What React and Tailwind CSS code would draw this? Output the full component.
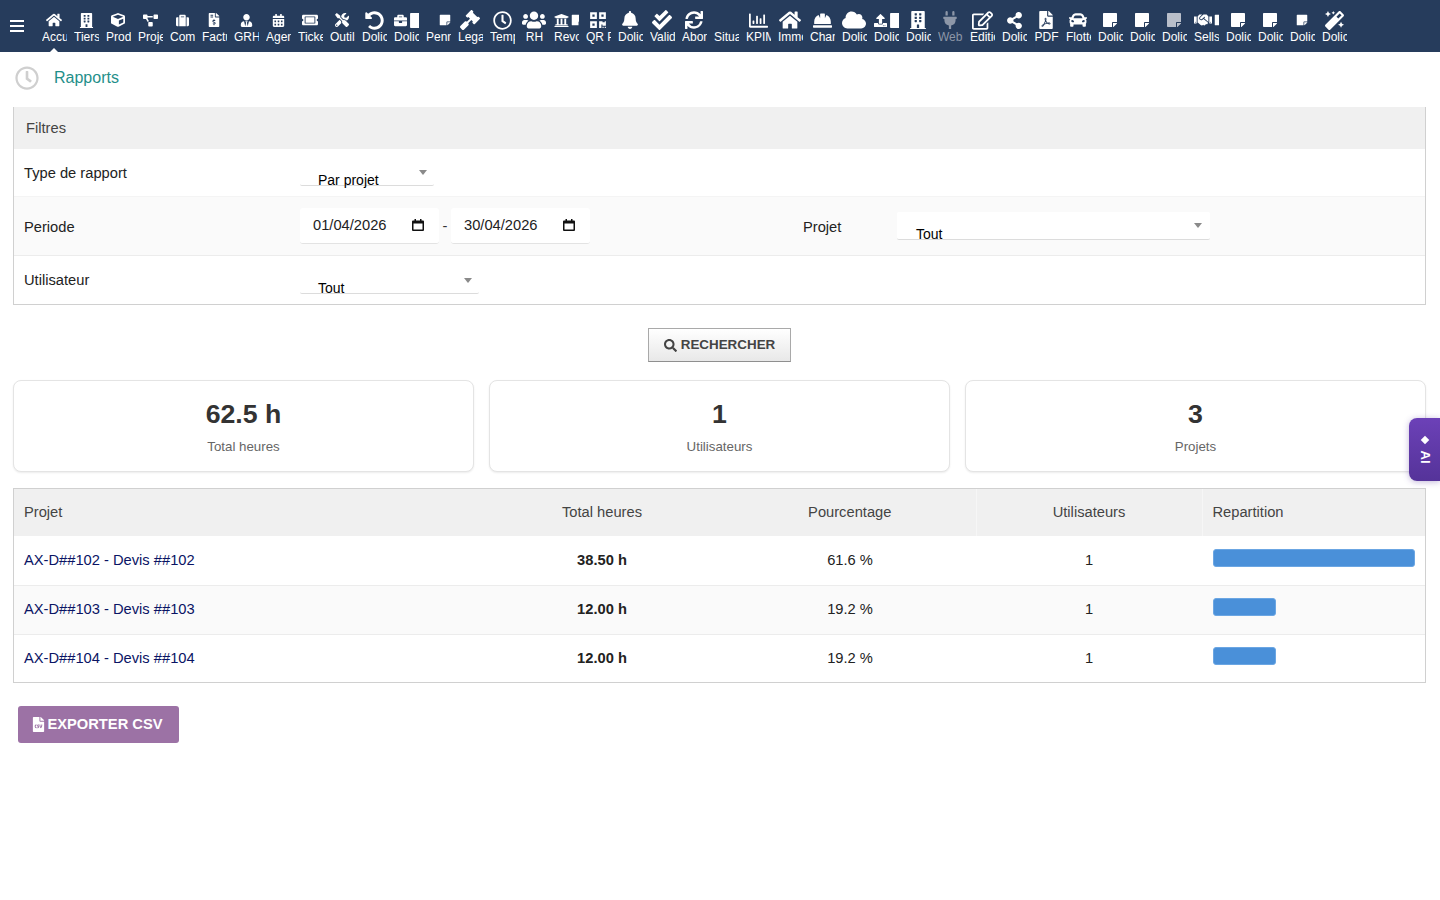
import React from "react";
import {
  FaHome, FaBuilding, FaCube, FaProjectDiagram, FaSuitcase, FaFileInvoiceDollar, FaUserTie, FaCalendarAlt,
  FaTicketAlt, FaTools, FaUndoAlt, FaBriefcase, FaStickyNote, FaGavel, FaRegClock, FaUsers, FaUniversity,
  FaQrcode, FaBell, FaCheckDouble, FaSync, FaRegChartBar, FaHardHat, FaCloud, FaUpload, FaPlug, FaRegEdit,
  FaShareAlt, FaFilePdf, FaCar, FaHandshake, FaMagic, FaSearch, FaFileCsv,
} from "react-icons/fa";

const Spacer = () => <span className="inline-block w-[15px] h-[1px]" />;

const menu = [
  { label: "Accueil", icons: [[FaHome, 16]] },
  { label: "Tiers", icons: [[FaBuilding, 15]] },
  { label: "Produits", icons: [[FaCube, 14]] },
  { label: "Projets", icons: [[FaProjectDiagram, 15]] },
  { label: "Commerce", icons: [[FaSuitcase, 13]] },
  { label: "Facturation", icons: [[FaFileInvoiceDollar, 14]] },
  { label: "GRH", icons: [[FaUserTie, 13]] },
  { label: "Agenda", icons: [[FaCalendarAlt, 13]] },
  { label: "Tickets", icons: [[FaTicketAlt, 16]] },
  { label: "Outils", icons: [[FaTools, 14]] },
  { label: "Dolicloud", icons: [[FaUndoAlt, 19]] },
  { label: "Dolicloud", clip: true, icons: [[FaBriefcase, 13], [FaStickyNote, 17]] },
  { label: "Penneo", clip: true, icons: [[Spacer, 0], [FaStickyNote, 12]] },
  { label: "Legal", icons: [[FaGavel, 20]] },
  { label: "Temps", icons: [[FaRegClock, 19]] },
  { label: "RH", icons: [[FaUsers, 24]] },
  { label: "Revolut", clip: true, icons: [[FaUniversity, 15], [FaStickyNote, 12]] },
  { label: "QR Paiement", icons: [[FaQrcode, 18]] },
  { label: "Dolicloud", icons: [[FaBell, 18]] },
  { label: "Validation", icons: [[FaCheckDouble, 20]] },
  { label: "Abonnement", icons: [[FaSync, 18]] },
  { label: "Situation", icons: [] },
  { label: "KPIManager", icons: [[FaRegChartBar, 19]] },
  { label: "Immobilier", icons: [[FaHome, 22]] },
  { label: "Chantier", icons: [[FaHardHat, 19]] },
  { label: "Dolicloud", icons: [[FaCloud, 24]] },
  { label: "Dolicloud", clip: true, icons: [[FaUpload, 13], [FaStickyNote, 17]] },
  { label: "Dolicloud", icons: [[FaBuilding, 18]] },
  { label: "Webhook", dim: true, icons: [[FaPlug, 18]] },
  { label: "Edition", icons: [[FaRegEdit, 21]] },
  { label: "Dolicloud", icons: [[FaShareAlt, 17]] },
  { label: "PDF", icons: [[FaFilePdf, 18]] },
  { label: "Flotte", icons: [[FaCar, 18]] },
  { label: "Dolicloud", icons: [[FaStickyNote, 16]] },
  { label: "Dolicloud", icons: [[FaStickyNote, 16]] },
  { label: "Dolicloud", icons: [[FaStickyNote, 16]], soft: true },
  { label: "Sellsy", clip: true, icons: [[FaHandshake, 18], [FaStickyNote, 12]] },
  { label: "Dolicloud", icons: [[FaStickyNote, 16]] },
  { label: "Dolicloud", icons: [[FaStickyNote, 16]] },
  { label: "Dolicloud", icons: [[FaStickyNote, 12]] },
  { label: "Dolicloud", icons: [[FaMagic, 19]] },
];

const rows = [
  ["AX-D##102 - Devis ##102", "38.50 h", "61.6 %", "w-[202px]", "bg-white h-[49px]"],
  ["AX-D##103 - Devis ##103", "12.00 h", "19.2 %", "w-[63px]", "bg-[#fafafa] h-[49px]"],
  ["AX-D##104 - Devis ##104", "12.00 h", "19.2 %", "w-[63px]", "bg-white h-[48px]"],
];

function Select({ label, w, h = "h-[24px]", bg = "", arrow = "top-[8px] right-[7px]", left = "left-[18px]" }) {
  return (
    <div className={`relative ${w} ${h} ${bg} border-b border-[#dcdcdc] rounded-[2px]`}>
      <span className={`absolute ${left} bottom-[-4px] text-[14px] leading-[18px] text-black`}>{label}</span>
      <span className={`absolute ${arrow} w-0 h-0 border-x-[4px] border-x-transparent border-t-[5px] border-t-[#8a8a8a]`} />
    </div>
  );
}

function DateField({ value }) {
  return (
    <div className="w-[139px] h-[36px] bg-white rounded-[3px] border-b border-[#e3e3e3] flex items-center justify-between pl-[13px] pr-[14px] pb-[1px] text-[#222]">
      <span>{value}</span>
      <svg width="14" height="14" viewBox="0 0 14 14"><path d="M1 3.5a1 1 0 0 1 1-1h10a1 1 0 0 1 1 1V12a1 1 0 0 1-1 1H2a1 1 0 0 1-1-1z M2.5 5.5V11.5H11.5V5.5z" fill="#111" fillRule="evenodd"/><rect x="3.5" y="1" width="1.5" height="2" fill="#111"/><rect x="9" y="1" width="1.5" height="2" fill="#111"/></svg>
    </div>
  );
}

function Stat({ value, label }) {
  return (
    <div className="h-[92px] rounded-[8px] border border-[#e4e4e4] shadow-[0_1px_2px_rgba(0,0,0,0.08)] bg-white flex flex-col items-center pt-[18px]">
      <div className="text-[26.7px] leading-[30px] font-bold text-[#333]">{value}</div>
      <div className="mt-[9px] text-[13.3px] leading-[18px] text-[#666]">{label}</div>
    </div>
  );
}

export default function App() {
  return (
    <div className="relative min-h-[900px] bg-white overflow-hidden font-['Liberation_Sans',Arial,sans-serif] text-[14.7px] text-[#222]">
      <header className="relative h-[52px] bg-[#263c5c] flex pl-[10px] text-white">
        <div className="w-[28px] pt-[20px] shrink-0">
          <div className="w-[14px] flex flex-col gap-[3px]">
            <span className="h-[2px] bg-white" /><span className="h-[2px] bg-white" /><span className="h-[2px] bg-white" />
          </div>
        </div>
        {menu.map(({ label, icons, dim, soft, clip }, i) => (
          <div key={i} className={`w-[32px] shrink-0 flex flex-col items-center ${dim ? "text-[#8d97a8]" : ""}`}>
            <div className={`h-[30px] pt-[10px] flex items-center gap-[2px] ${clip ? "w-[25px] ml-[1px] justify-start overflow-hidden" : "justify-center"} ${soft ? "text-[#b9bfca]" : ""}`}>
              {icons.map(([Icon, size], k) => <Icon key={k} size={size} className="shrink-0" />)}
            </div>
            <div className="w-[25px] ml-[1px] overflow-hidden whitespace-nowrap text-center text-[12px] leading-[14px]">{label}</div>
          </div>
        ))}
        <span className="absolute left-[50px] bottom-0 w-0 h-0 border-x-[4px] border-x-transparent border-b-[4px] border-b-white" />
      </header>

      <div className="h-[55px] flex items-center pl-[15px] pb-[4px]">
        <FaRegClock size={24} className="text-[#cfcfcf]" />
        <h1 className="ml-[15px] text-[16px] text-[#1f8f8a] font-normal">Rapports</h1>
      </div>

      <section className="ml-[13px] mr-[14px] border-x border-b border-[#d0d0d0]">
        <div className="h-[42px] bg-[#f0f0f0] flex items-center pl-[12px] text-[#444]">Filtres</div>
        <div className="h-[48px] flex items-center pl-[10px] border-b border-[#f4f4f4]">
          <div className="w-[276px] pt-[2px]">Type de rapport</div>
          <div className="mt-[2px]"><Select label="Par projet" w="w-[134px]" /></div>
        </div>
        <div className="h-[59px] flex items-center pl-[10px] bg-[#fafafa] border-b border-[#ececec]">
          <div className="w-[276px] pt-[2px]">Periode</div>
          <DateField value="01/04/2026" />
          <span className="w-[12px] text-center text-[#333]">-</span>
          <DateField value="30/04/2026" />
          <div className="ml-[213px] w-[94px] pt-[2px]">Projet</div>
          <Select label="Tout" w="w-[313px]" h="h-[28px]" bg="bg-white" arrow="top-[11px] right-[8px]" left="left-[19px]" />
        </div>
        <div className="h-[48px] flex items-center pl-[10px]">
          <div className="w-[276px]">Utilisateur</div>
          <div className="mt-[3px]"><Select label="Tout" w="w-[179px]" /></div>
        </div>
      </section>

      <div className="flex justify-center mt-[23px] pr-[1px]">
        <button className="w-[143px] h-[34px] border border-[#a9a9a9] border-b-[#8f8f8f] bg-gradient-to-b from-white to-[#e8e8e8] text-[#444] font-bold text-[13.4px] flex items-center justify-center gap-[4px]">
          <FaSearch size={13} /> RECHERCHER
        </button>
      </div>

      <div className="grid grid-cols-3 gap-[15px] ml-[13px] mr-[14px] mt-[18px]">
        <Stat value="62.5 h" label="Total heures" />
        <Stat value="1" label="Utilisateurs" />
        <Stat value="3" label="Projets" />
      </div>

      <div className="ml-[13px] mr-[14px] mt-[16px] border border-[#d0d0d0]">
        <table className="w-full table-fixed border-collapse">
          <colgroup>
            <col className="w-[466px]" /><col className="w-[244px]" /><col className="w-[252px]" /><col className="w-[226px]" /><col className="w-[223px]" />
          </colgroup>
          <thead>
            <tr className="h-[47px] bg-[#f0f0f0] text-[#444]">
              <th className="font-normal text-left pl-[10px]">Projet</th>
              <th className="font-normal text-center">Total heures</th>
              <th className="font-normal text-center">Pourcentage</th>
              <th className="font-normal text-center border-l border-[#f6f6f6]">Utilisateurs</th>
              <th className="font-normal text-left pl-[10px] border-l border-[#f6f6f6]">Repartition</th>
            </tr>
          </thead>
          <tbody>
            {rows.map(([name, hours, pct, bar, bg]) => (
              <tr key={name} className={`${bg} border-t border-[#ececec] first:border-t-0`}>
                <td className="pl-[10px] text-[#0a1464]">{name}</td>
                <td className="text-center font-bold">{hours}</td>
                <td className="text-center">{pct}</td>
                <td className="text-center">1</td>
                <td className="pl-[11px]">
                  <div className={`${bar} h-[18px] -mt-[5px] rounded-[3px] bg-[#4a90d9] border border-[#6ba6e3]`} />
                </td>
              </tr>
            ))}
          </tbody>
        </table>
      </div>

      <div className="pl-[18px] mt-[23px]">
        <button className="w-[161px] h-[37px] pr-[3px] rounded-[3px] bg-[#9c72a5] text-white font-bold text-[14.7px] flex items-center justify-center gap-[1px]">
          <FaFileCsv size={15} /> EXPORTER CSV
        </button>
      </div>

      <div className="absolute left-[1409px] top-[418px] w-[31px] h-[63px] rounded-l-[8px] bg-gradient-to-b from-[#6c41b8] to-[#553399] shadow-[0_1px_6px_rgba(80,50,150,0.35)] flex flex-col items-center pt-[19px] text-white">
        <span className="w-[6px] h-[6px] bg-white rotate-45" />
        <span className="mt-[7px] rotate-90 text-[13px] leading-[14px] font-bold">AI</span>
      </div>
    </div>
  );
}
